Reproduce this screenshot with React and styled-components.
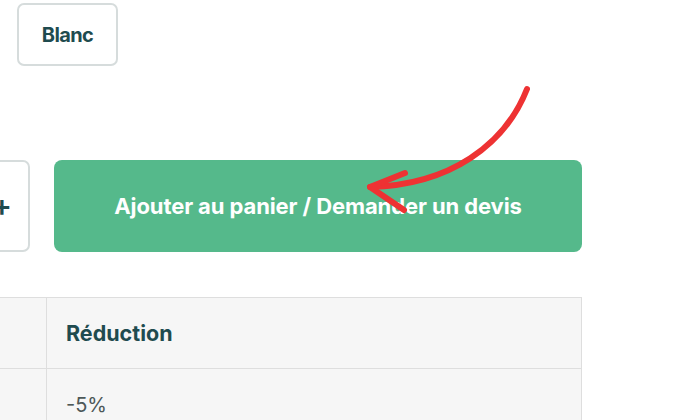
import React from "react";
import styled, { createGlobalStyle } from "styled-components";

const Global = createGlobalStyle`
  html, body {
    margin: 0;
    background: #ffffff;
    overflow: hidden;
  }
  body {
    font-family: "Inter", "Open Sans", sans-serif;
  }
`;

const Page = styled.div`
  position: relative;
  width: 700px;
  height: 420px;
  overflow: hidden;
  padding-top: 3px;
  box-sizing: border-box;
`;

const Swatches = styled.div`
  display: flex;
  gap: 12px;
  padding-left: 17px;
`;

const Swatch = styled.button`
  width: 101px;
  height: 63px;
  border: 2px solid #d6dcdc;
  border-radius: 7px;
  background: #fff;
  font-family: inherit;
  font-size: 20px;
  font-weight: 700;
  letter-spacing: -0.6px;
  color: #1f4b4f;
  cursor: pointer;
`;

const Actions = styled.div`
  display: flex;
  gap: 24px;
  margin-top: 94px;
  margin-left: -62px;
  width: 644px;
  height: 92px;
`;

const QtyButton = styled.button`
  width: 92px;
  border: 2px solid #d6dcdc;
  border-radius: 7px;
  background: #fff;
  color: #1f4b4f;
  font-family: inherit;
  font-size: 30px;
  font-weight: 600;
  display: flex;
  align-items: center;
  justify-content: flex-end;
  padding: 0 16px 3px 0;
`;

const CartButton = styled.button`
  flex: 1;
  border: none;
  border-radius: 8px;
  background: #55b98b;
  color: #fff;
  font-family: inherit;
  font-size: 22px;
  font-weight: 700;
  letter-spacing: -0.1px;
`;

const Table = styled.div`
  margin-top: 45px;
  margin-left: -100px;
  width: 681px;
  display: grid;
  grid-template-columns: 146px 1fr;
  background: #f6f6f6;
  border-top: 1px solid #dedede;
  border-right: 1px solid #dedede;
`;

const Cell = styled.div`
  height: ${(p) => (p.$head ? "70px" : "72px")};
  border-bottom: 1px solid #dedede;
  border-left: 1px solid #dedede;
  display: flex;
  align-items: center;
  padding-left: 19px;
  font-size: ${(p) => (p.$head ? "21.5px" : "20px")};
  font-weight: ${(p) => (p.$head ? 700 : 400)};
  color: ${(p) => (p.$head ? "#1f4b4f" : "#4d5858")};
`;

const Arrow = styled.svg`
  position: absolute;
  left: 0;
  top: 0;
  pointer-events: none;
`;

export default function App() {
  return (
    <>
      <Global />
      <Page>
        <Swatches>
          <Swatch>Blanc</Swatch>
        </Swatches>
        <Actions>
          <QtyButton>+</QtyButton>
          <CartButton>Ajouter au panier / Demander un devis</CartButton>
        </Actions>
        <Table>
          <Cell $head />
          <Cell $head>Réduction</Cell>
          <Cell />
          <Cell>-5%</Cell>
        </Table>
        <Arrow width="700" height="420" viewBox="0 0 700 420">
          <g
            fill="none"
            stroke="#ee3233"
            strokeWidth="6"
            strokeLinecap="round"
            strokeLinejoin="round"
          >
            <path d="M527 89 C 505 145, 450 185, 370 187" />
            <path d="M405 173 L 370 187 L 404 210" />
          </g>
        </Arrow>
      </Page>
    </>
  );
}
